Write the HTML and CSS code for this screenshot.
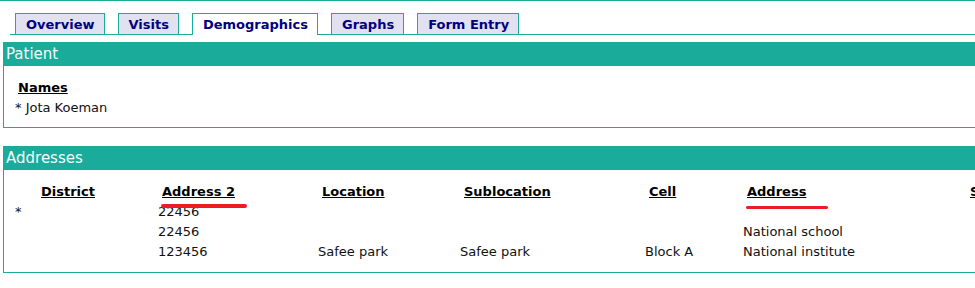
FILE: index.html
```html
<!DOCTYPE html>
<html lang="en">
<head>
  <meta charset="UTF-8">
  <title>Patient Dashboard - Demographics</title>
  <link rel="stylesheet" href="styles.css">
</head>
<body>
  <div class="page">
    <ul class="tabs">
      <li class="tab">Overview</li>
      <li class="tab">Visits</li>
      <li class="tab active">Demographics</li>
      <li class="tab">Graphs</li>
      <li class="tab">Form Entry</li>
    </ul>

    <div class="box">
      <div class="box-header">Patient</div>
      <div class="box-body patient-body">
        <div class="names-title">Names</div>
        <div class="name-row">* Jota Koeman</div>
      </div>
    </div>

    <div class="box addresses">
      <div class="box-header">Addresses</div>
      <div class="box-body">
        <table class="addr-table">
          <colgroup>
            <col class="c-pref">
            <col class="c-district">
            <col class="c-addr2">
            <col class="c-location">
            <col class="c-subloc">
            <col class="c-cell">
            <col class="c-address">
            <col class="c-last">
          </colgroup>
          <tr>
            <th></th>
            <th>District</th>
            <th class="marked"><span>Address 2</span></th>
            <th>Location</th>
            <th>Sublocation</th>
            <th>Cell</th>
            <th class="marked wide"><span>Address</span></th>
            <th>State</th>
          </tr>
          <tr>
            <td class="star">*</td>
            <td></td>
            <td>22456</td>
            <td></td>
            <td></td>
            <td></td>
            <td></td>
            <td></td>
          </tr>
          <tr>
            <td></td>
            <td></td>
            <td>22456</td>
            <td></td>
            <td></td>
            <td></td>
            <td>National school</td>
            <td></td>
          </tr>
          <tr>
            <td></td>
            <td></td>
            <td>123456</td>
            <td>Safee park</td>
            <td>Safee park</td>
            <td>Block A</td>
            <td>National institute</td>
            <td></td>
          </tr>
        </table>
      </div>
    </div>
  </div>
</body>
</html>
```

FILE: styles.css
```css
html, body {
  overflow: hidden;
}

body {
  margin: 0;
  font-family: "DejaVu Sans", Verdana, sans-serif;
  font-size: 13px;
  color: #111;
  background: #fff;
}

.page {
  border-top: 1px solid #1aab9b;
  width: 1200px;
}

/* tabs */
.tabs {
  list-style: none;
  display: flex;
  gap: 13px;
  margin: 12px 0 0 10px;
  padding: 0 0 0 5px;
  border-bottom: 1px solid #1aab9b;
  height: 21px;
}

.tab {
  box-sizing: border-box;
  height: 21px;
  padding: 0 9px 0 10px;
  border: 1px solid #1aab9b;
  border-bottom: none;
  background: #e1e1f1;
  color: #000080;
  font-weight: bold;
  line-height: 21px;
}

.tab.active {
  background: #fff;
  height: 22px;
}

/* boxes */
.box {
  margin: 7px 0 0 3px;
  border-left: 1px solid #1aab9b;
  border-bottom: 1px solid #1aab9b;
}

.addresses {
  margin-top: 18px;
}

.box-header {
  background: #1aab9b;
  color: #f4fffc;
  font-size: 15px;
  height: 24px;
  line-height: 24px;
  padding-left: 3px;
  margin-left: -1px;
}

.box-body {
  padding: 11px 0 11px 11px;
}

.patient-body {
  padding: 12px 0 10px 11px;
}

.names-title {
  font-weight: bold;
  text-decoration: underline;
  color: #000;
  padding-left: 3px;
  line-height: 20px;
}

.name-row {
  line-height: 19px;
}

/* addresses table */
.addr-table {
  border-collapse: collapse;
  table-layout: fixed;
}

.addr-table th,
.addr-table td {
  padding: 0;
  height: 20px;
  text-align: left;
  white-space: nowrap;
  vertical-align: middle;
}

.addr-table th {
  padding-left: 4px;
  font-weight: bold;
  text-decoration: underline;
  color: #000;
}

.c-pref { width: 22px; }
.c-district { width: 121px; }
.c-addr2 { width: 160px; }
.c-location { width: 142px; }
.c-subloc { width: 185px; }
.c-cell { width: 98px; }
.c-address { width: 223px; }
.c-last { width: 120px; }

.star {
  vertical-align: top;
  padding-top: 1px;
}

.marked span {
  position: relative;
}

.marked span::after {
  content: "";
  position: absolute;
  left: -1px;
  right: -12px;
  bottom: -9px;
  height: 4px;
  border-radius: 2px;
  background: #ec1c24;
}

.marked.wide span::after {
  right: -22px;
  bottom: -10px;
  height: 3px;
}
```
